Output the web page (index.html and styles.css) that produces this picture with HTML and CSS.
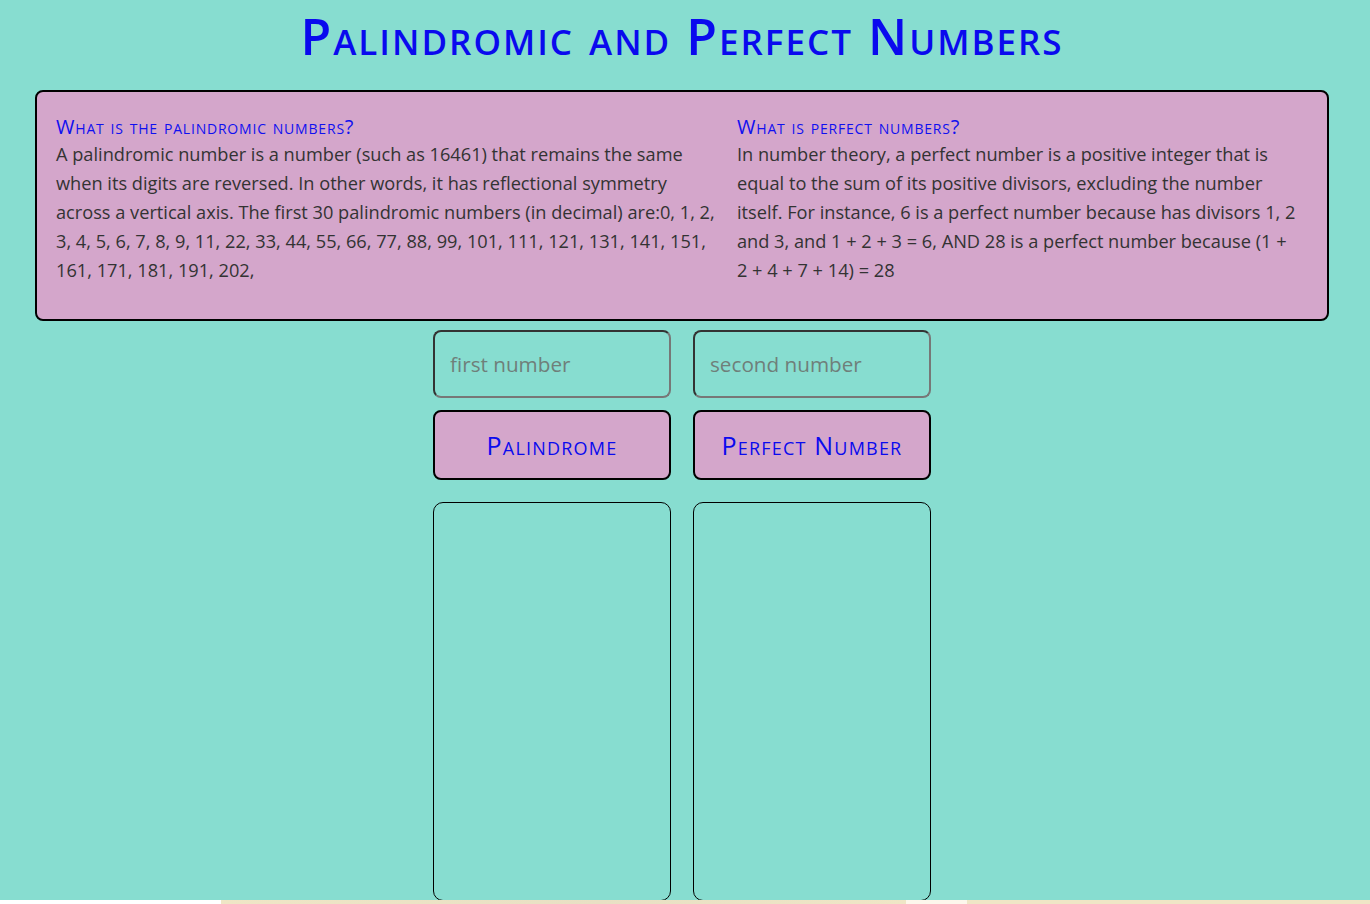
FILE: index.html
```html
<!DOCTYPE html>
<html lang="en">
<head>
<meta charset="utf-8">
<title>Palindromic and Perfect Numbers</title>
<link rel="stylesheet" href="styles.css">
</head>
<body>
<div class="page">
  <h1 class="title">Palindromic and Perfect Numbers</h1>
  <section class="info">
    <div class="info-col">
      <h2 class="info-head">What is the palindromic numbers?</h2>
      <p class="info-text">A palindromic number is a number (such as 16461) that remains the same when its digits are reversed. In other words, it has reflectional symmetry across a vertical axis. The first 30 palindromic numbers (in decimal) are:0, 1, 2, 3, 4, 5, 6, 7, 8, 9, 11, 22, 33, 44, 55, 66, 77, 88, 99, 101, 111, 121, 131, 141, 151, 161, 171, 181, 191, 202,</p>
    </div>
    <div class="info-col">
      <h2 class="info-head">What is perfect numbers?</h2>
      <p class="info-text">In number theory, a perfect number is a positive integer that is equal to the sum of its positive divisors, excluding the number itself. For instance, 6 is a perfect number because has divisors 1, 2 and 3, and 1 + 2 + 3 = 6, AND 28 is a perfect number because (1 + 2 + 4 + 7 + 14) = 28</p>
    </div>
  </section>
  <div class="controls">
    <input class="num-input" type="text" placeholder="first number">
    <input class="num-input" type="text" placeholder="second number">
    <button class="action">Palindrome</button>
    <button class="action">Perfect Number</button>
    <div class="output"></div>
    <div class="output"></div>
  </div>
</div>
<div class="strip"></div>
</body>
</html>
```

FILE: styles.css
```css
html, body {
  margin: 0;
  padding: 0;
}
body {
  background: #87ddd0;
  font-family: "Open Sans", "Noto Sans", sans-serif;
  color: #333333;
  overflow: hidden;
  height: 904px;
}
.page {
  width: 1364px;
  height: 900px;
  overflow: hidden;
}
.title {
  margin: 0;
  padding-top: 2px;
  height: 90px;
  box-sizing: border-box;
  text-align: center;
  font-variant: small-caps;
  font-weight: 600;
  font-size: 50px;
  letter-spacing: 2px;
  line-height: 68px;
  color: #0a0aee;
}
.info {
  margin: 0 35px;
  height: 231px;
  box-sizing: border-box;
  background: #d4a6cb;
  border: 2px solid #000;
  border-radius: 8px;
  padding: 22px 29px 0 19px;
  display: grid;
  grid-template-columns: 660px 1fr;
  column-gap: 21px;
}
.info-head {
  margin: 0;
  font-variant: small-caps;
  font-weight: 400;
  font-size: 20px;
  letter-spacing: 0.8px;
  line-height: 26px;
  color: #1010f0;
}
.info-text {
  margin: 0;
  font-size: 18.2px;
  line-height: 29px;
}
.controls {
  margin: 9px auto 0;
  width: 498px;
  display: grid;
  grid-template-columns: 238px 238px;
  column-gap: 22px;
}
.num-input {
  box-sizing: border-box;
  height: 68px;
  margin: 0;
  padding: 0 15px;
  background: transparent;
  border: 2px solid;
  border-color: #333 #777 #777 #333;
  border-radius: 8px;
  font-family: inherit;
  font-size: 20.7px;
  color: #333;
}
.num-input::placeholder {
  color: #6f7f7a;
}
.action {
  box-sizing: border-box;
  height: 70px;
  margin-top: 12px;
  background: #d4a6cb;
  border: 2px solid #000;
  border-radius: 8px;
  font-family: inherit;
  font-variant: small-caps;
  font-size: 25px;
  letter-spacing: 1.2px;
  color: #0a0aee;
  cursor: pointer;
}
.output {
  box-sizing: border-box;
  height: 399px;
  margin-top: 22px;
  border: 1px solid #000;
  border-radius: 10px;
}
.strip {
  height: 4px;
  background: linear-gradient(to right, #ffffff 0, #ffffff 221px, #efe6c6 221px, #e8e0c4 600px, #efe6c6 906px, #fdf7ec 906px, #fdf7ec 967px, #efe6c6 967px);
}
```
